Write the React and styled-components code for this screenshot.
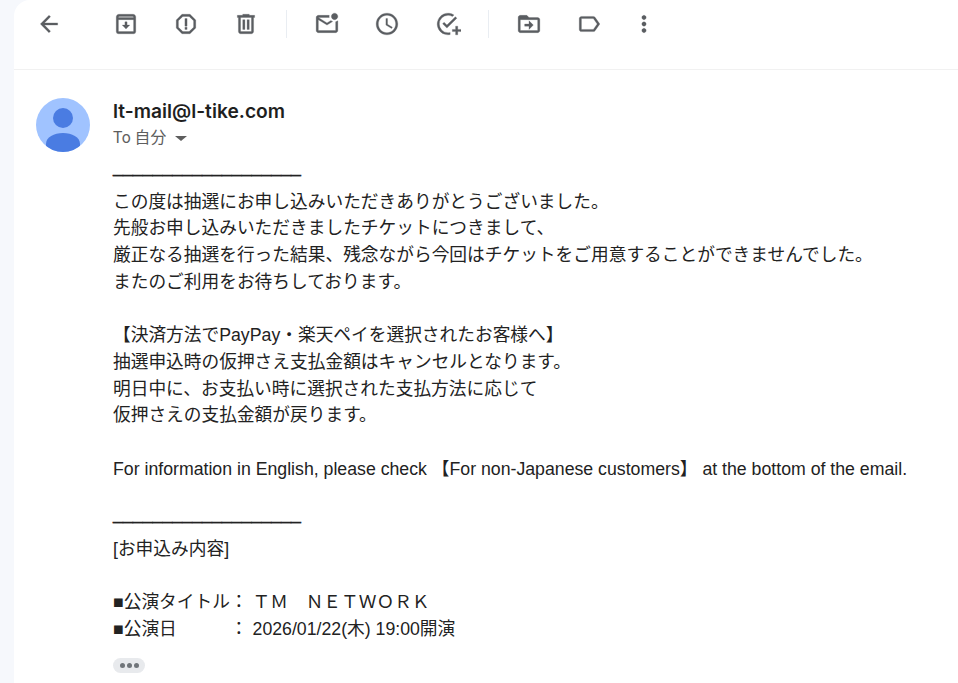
import React from 'react';
import styled, { createGlobalStyle } from 'styled-components';

const GlobalStyle = createGlobalStyle`
  html, body {
    margin: 0;
    padding: 0;
    height: 100%;
    overflow: hidden;
    background: #f6f8fc;
  }
`;

const Page = styled.div`
  width: 958px;
  height: 683px;
  padding-left: 14px;
  box-sizing: border-box;
  overflow: hidden;
`;

const Panel = styled.main`
  height: 100%;
  background: #fff;
  border-top-left-radius: 16px;
  overflow: hidden;
`;

const Toolbar = styled.div`
  display: flex;
  align-items: center;
  height: 70px;
  padding: 0 0 22px 5px;
  box-sizing: border-box;
  border-bottom: 1px solid #f1f1f1;
`;

const ToolButton = styled.div`
  display: flex;
  align-items: center;
  justify-content: center;
  flex: none;
  width: ${(p) => p.$w || 60}px;
  margin-left: ${(p) => p.$gap || 0}px;
  height: 48px;
  color: #5a5d61;
`;

const Divider = styled.div`
  flex: none;
  width: 1px;
  height: 28px;
  margin: 0 10px;
  background: #e9edf2;
`;

const Icon = styled.svg`
  width: 26px;
  height: 26px;
  fill: currentColor;
  stroke: currentColor;
  stroke-width: 0.25;
`;

const Header = styled.div`
  display: flex;
  padding: 28px 0 0 22px;
`;

const Avatar = styled.svg`
  flex: none;
  width: 54px;
  height: 54px;
  border-radius: 50%;
`;

const Sender = styled.div`
  margin-left: 23px;
`;

const SenderName = styled.div`
  font: 600 19.2px/26px 'Inter', 'Roboto', sans-serif;
  color: #1f1f1f;
`;

const Recipient = styled.div`
  display: flex;
  align-items: center;
  margin-top: 2px;
  font: 400 15.8px/24px 'Roboto', 'Noto Sans CJK JP', sans-serif;
  color: #5e5e5e;
`;

const Caret = styled.span`
  width: 0;
  height: 0;
  margin: 1px 0 0 9px;
  border-left: 6px solid transparent;
  border-right: 6px solid transparent;
  border-top: 5px solid #5e5e5e;
`;

const Body = styled.div`
  margin: 10px 0 0 99px;
  font: 400 17.72px/26.7px 'Liberation Sans', 'Noto Sans CJK JP', sans-serif;
  color: #222;
  white-space: pre;
`;

const Line = styled.div`
  height: 26.7px;
`;

const Rule = styled(Line)`
  position: relative;
  top: -9px;
  letter-spacing: 0.05px;
  -webkit-text-stroke: 0.4px #222;
`;

const MoreButton = styled.div`
  display: flex;
  align-items: center;
  justify-content: center;
  gap: 2px;
  width: 32px;
  height: 15px;
  margin: 16px 0 0 99px;
  border-radius: 8px;
  background: #e8eaed;
`;

const Dot = styled.span`
  width: 5px;
  height: 5px;
  border-radius: 50%;
  background: #70757a;
`;

const RULE = '___________________';

const lines = [
  RULE,
  'この度は抽選にお申し込みいただきありがとうございました。',
  '先般お申し込みいただきましたチケットにつきまして、',
  '厳正なる抽選を行った結果、残念ながら今回はチケットをご用意することができませんでした。',
  'またのご利用をお待ちしております。',
  '',
  '【決済方法でPayPay・楽天ペイを選択されたお客様へ】',
  '抽選申込時の仮押さえ支払金額はキャンセルとなります。',
  '明日中に、お支払い時に選択された支払方法に応じて',
  '仮押さえの支払金額が戻ります。',
  '',
  'For information in English, please check 【For non-Japanese customers】 at the bottom of the email.',
  '',
  RULE,
  '[お申込み内容]',
  '',
  '■公演タイトル： ＴＭ　ＮＥＴＷＯＲＫ',
  '■公演日　　　： 2026/01/22(木) 19:00開演',
];

const icons = {
  back: 'M20 11H7.83l5.59-5.59L12 4l-8 8 8 8 1.41-1.41L7.83 13H20v-2z',
  archive:
    'M21 5.500V19a2 2 0 0 1-2 2H5a2 2 0 0 1-2-2V5.500C3 4.100 4.100 3 5.500 3h13C19.900 3 21 4.100 21 5.500zM5 8v11h14V8H5zm.4-3L5 6h14l-.4-1H5.400zM11 10h2v3h2.500L12 16.500 8.500 13H11v-3z',
  spam:
    'M15.73 3H8.27L3 8.27v7.46L8.27 21h7.46L21 15.73V8.27L15.73 3zM19 14.900 14.900 19H9.100L5 14.900V9.100L9.100 5h5.800L19 9.100v5.800zM11 7h2v7h-2V7zm0 8h2v2h-2v-2z',
  trash:
    'M15 4V3H9v1H4v2h1v13c0 1.100.9 2 2 2h10c1.100 0 2-.9 2-2V6h1V4h-5zm2 15H7V6h10v13zM9 8h2v9H9V8zm4 0h2v9h-2V8z',
  unread:
    'M22 8.980V18c0 1.100-.9 2-2 2H4c-1.100 0-2-.9-2-2V6c0-1.100.9-2 2-2h10.100c-.06.320-.1.660-.1 1s.04.680.1 1H4l8 5 3.670-2.300c.47.430 1.020.770 1.630 1L12 13 4 8v10h16V9.900c.74-.15 1.420-.48 2-.92zM16 5c0 1.660 1.340 3 3 3s3-1.340 3-3-1.340-3-3-3-3 1.340-3 3z',
  snooze:
    'M11.990 2C6.470 2 2 6.480 2 12s4.470 10 9.990 10C17.520 22 22 17.520 22 12S17.520 2 11.990 2zM12 20c-4.420 0-8-3.580-8-8s3.580-8 8-8 8 3.580 8 8-3.580 8-8 8zm.5-13H11v6l5.250 3.150.75-1.230-4.500-2.670V7z',
  task:
    'M12 20a8 8 0 0 1 0-16c1.500 0 2.900.4 4.100 1.100l1.450-1.450A10 10 0 1 0 14 21.800v-2.050c-.64.160-1.310.250-2 .250zm8.200-13.400L11 15.800l-4-4 1.400-1.400 2.600 2.600 7.800-7.800 1.400 1.400zM19 14v3h-3v2h3v3h2v-3h3v-2h-3v-3h-2z',
  move:
    'M20 6h-8l-2-2H4c-1.100 0-2 .9-2 2v12c0 1.100.9 2 2 2h16c1.100 0 2-.9 2-2V8c0-1.100-.9-2-2-2zm0 12H4V8h16v10zm-8-1 4-4-4-4v3H8v2h4v3z',
  label:
    'M17.630 5.840C17.270 5.330 16.670 5 16 5L5 5.010C3.900 5.010 3 5.900 3 7v10c0 1.100.9 1.990 2 1.990L16 19c.67 0 1.270-.33 1.630-.84L22 12l-4.370-6.160zM16 17H5V7h11l3.550 5L16 17z',
  more:
    'M12 8c1.100 0 2-.9 2-2s-.9-2-2-2-2 .9-2 2 .9 2 2 2zm0 2c-1.100 0-2 .9-2 2s.9 2 2 2 2-.9 2-2-.9-2-2-2zm0 6c-1.100 0-2 .9-2 2s.9 2 2 2 2-.9 2-2-.9-2-2-2z',
};

const ToolIcon = ({ name, w, gap }) => (
  <ToolButton $w={w} $gap={gap}>
    <Icon viewBox="0 0 24 24">
      <path d={icons[name]} />
    </Icon>
  </ToolButton>
);

const App = () => {
  return (
    <>
      <GlobalStyle />
      <Page>
        <Panel>
          <Toolbar>
            <ToolIcon name="back" />
            <ToolIcon name="archive" gap={16} w={61} />
            <ToolIcon name="spam" />
            <ToolIcon name="trash" />
            <Divider />
            <ToolIcon name="unread" />
            <ToolIcon name="snooze" />
            <ToolIcon name="task" w={61} />
            <Divider />
            <ToolIcon name="move" />
            <ToolIcon name="label" />
            <ToolIcon name="more" w={50} />
          </Toolbar>
          <Header>
            <Avatar viewBox="0 0 54 54">
              <rect width="54" height="54" fill="#a0c3ff" />
              <circle cx="27" cy="20" r="10" fill="#4a7ce2" />
              <path d="M10 54V46C10 39 18 35 27 35S44 39 44 46V54Z" fill="#4a7ce2" />
            </Avatar>
            <Sender>
              <SenderName>lt-mail@l-tike.com</SenderName>
              <Recipient>
                To 自分
                <Caret />
              </Recipient>
            </Sender>
          </Header>
          <Body>
            {lines.map((text, i) =>
              text === RULE ? <Rule key={i}>{text}</Rule> : <Line key={i}>{text}</Line>
            )}
          </Body>
          <MoreButton>
            <Dot />
            <Dot />
            <Dot />
          </MoreButton>
        </Panel>
      </Page>
    </>
  );
};

export default App;
